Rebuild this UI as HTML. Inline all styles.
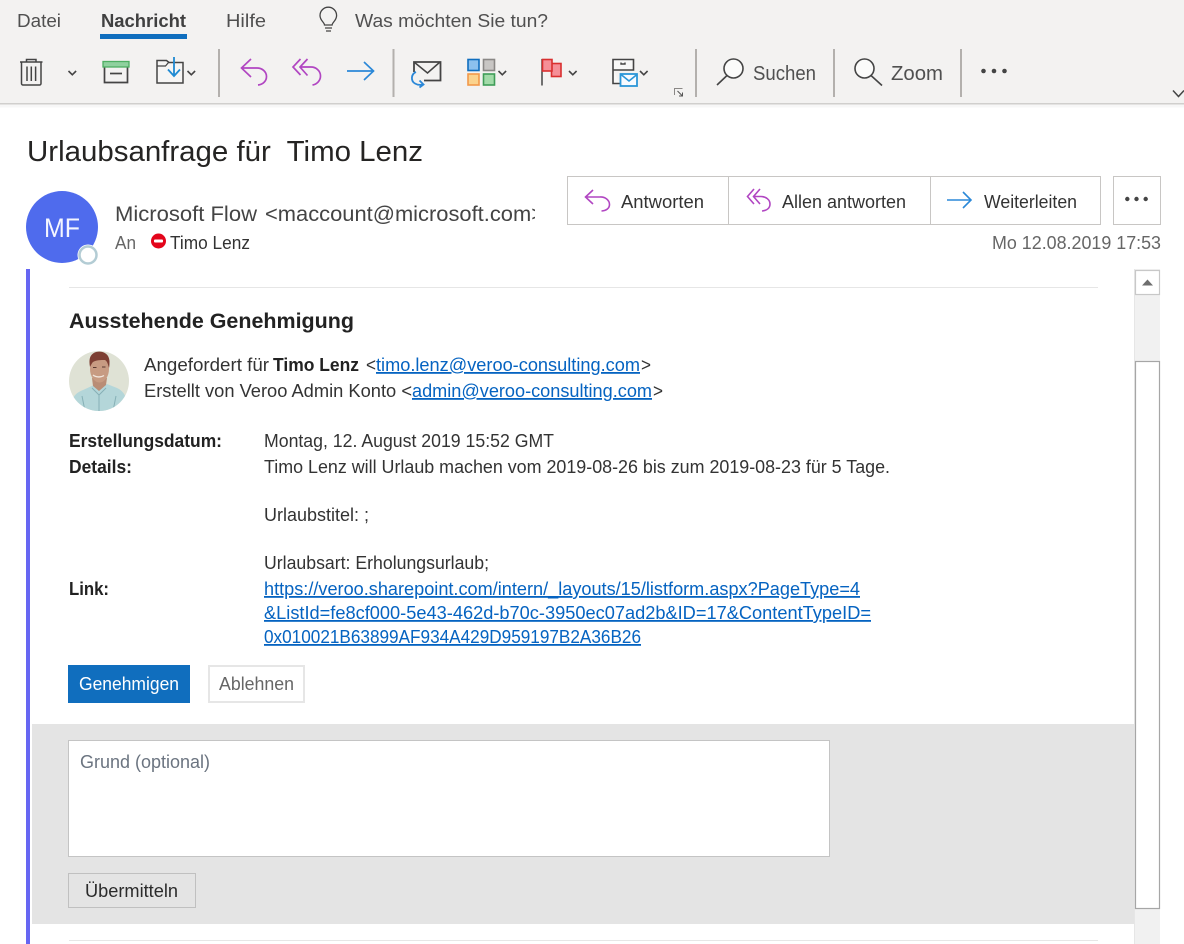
<!DOCTYPE html>
<html lang="de">
<head>
<meta charset="utf-8">
<title>Urlaubsanfrage für Timo Lenz</title>
<style>
html,body{margin:0;padding:0;background:#fff;width:1184px;height:944px;overflow:hidden}
svg{display:block;position:absolute;left:0;top:0}
text{font-family:"Liberation Sans",sans-serif;font-size:18px;fill:#333;white-space:pre}
.b{font-weight:bold;fill:#222}
.r{fill:#505050}
.l{fill:#0563c1;text-decoration:underline}
</style>
</head>
<body>
<svg width="1184" height="944" viewBox="0 0 1184 944" xmlns="http://www.w3.org/2000/svg">
<defs>
<clipPath id="c1"><rect x="110" y="195" width="425" height="40"/></clipPath>
<clipPath id="c2"><circle cx="99" cy="381" r="30"/></clipPath>
</defs>

<!-- ribbon -->
<rect width="1184" height="103" fill="#f3f2f1"/>
<rect y="103" width="1184" height="1.5" fill="#d0cfcd"/>
<rect y="104.500" width="1184" height="3" fill="#f7f7f7"/>
<text class="r" x="17" y="27" textLength="44" lengthAdjust="spacingAndGlyphs">Datei</text>
<text x="101" y="27" class="b" style="fill:#404040" textLength="85" lengthAdjust="spacingAndGlyphs">Nachricht</text>
<rect x="100" y="34" width="87" height="5" fill="#106ebe"/>
<text class="r" x="226" y="27" textLength="40" lengthAdjust="spacingAndGlyphs">Hilfe</text>
<text class="r" x="355" y="27" textLength="193" lengthAdjust="spacingAndGlyphs">Was möchten Sie tun?</text>
<!-- bulb -->
<g fill="none" stroke="#444" stroke-width="1.300">
<path d="M324.500 25.500c0-2.500-4.500-4.500-4.500-9.500a8.300 8.300 0 0 1 16.600 0c0 5-4.500 7-4.500 9.500z" transform="translate(0 -.5)"/>
<path d="M325 28h7M326 31h5"/>
</g>
<!-- trash -->
<g fill="none" stroke="#444" stroke-width="1.500">
<path d="M20 62h22.500M26.500 61.500V59.500h9.500v2"/>
<path d="M21.500 62v21.500a1.500 1.500 0 0 0 1.500 1.500h16.500a1.500 1.500 0 0 0 1.500-1.500V62"/>
<path d="M27 66.500v14.500M31.300 66.500v14.500M35.600 66.500v14.500"/>
</g>
<path d="M68.500 71l3.800 3.800 3.800-3.800" fill="none" stroke="#444" stroke-width="1.600"/>
<!-- archive -->
<path d="M104.500 67.500v15h23v-15" fill="#f3f2f1" stroke="#444" stroke-width="1.700"/>
<rect x="103" y="61.500" width="26" height="5.500" fill="#8fd19e" stroke="#4eae62" stroke-width="1.300"/>
<path d="M110 73.500h12" stroke="#444" stroke-width="1.700"/>
<!-- move -->
<path d="M157 61v22h26V62.500h-14l-2.500-2H157z" fill="#f6f5f4" stroke="#444" stroke-width="1.500"/>
<path d="M157.500 66h8l3-3.500" fill="none" stroke="#444" stroke-width="1.200"/>
<path d="M174 57v18M168 69.500l6 6.500 6-6.500" fill="none" stroke="#1f8ad2" stroke-width="1.800"/>
<path d="M187.500 71l3.800 3.800 3.800-3.800" fill="none" stroke="#444" stroke-width="1.600"/>
<rect x="218" y="49" width="2" height="48" fill="#b3b0ad"/>
<!-- reply -->
<g fill="none" stroke="#b146c2" stroke-width="1.700">
<path d="M251 59l-9.500 9 9.500 9M241.500 68h15a9.500 8.500 0 0 1 10 8.500c0 4.500-3.500 8-8.500 8.500"/>
<path d="M300.500 59l-7.500 8 7.500 8M307.500 59l-7.500 8 7.500 8.500M300 67h10.500a9.500 9 0 0 1 10 9c0 4.500-3.500 8.200-8 9"/>
</g>
<path d="M347 71h27M364 62l9.500 9-9.500 9" fill="none" stroke="#2b88d8" stroke-width="1.700"/>
<rect x="392.500" y="49" width="2" height="48" fill="#b3b0ad"/>
<!-- mail reply -->
<path d="M414 72V62h26.500V80.500H424" fill="none" stroke="#444" stroke-width="1.800"/>
<path d="M414 62l13.500 11L440 62" fill="none" stroke="#444" stroke-width="1.500"/>
<path d="M416 72c-5 2-5.500 9-1 11.500 2.500 1.500 6 1.500 8 1M419.500 80.500l4 4-4 3" fill="none" stroke="#2b88d8" stroke-width="1.800"/>
<!-- categories -->
<rect x="468" y="59.500" width="11" height="11" fill="#8cc1ee" stroke="#106ebe" stroke-width="1.600"/>
<rect x="483.500" y="59.500" width="11" height="11" fill="#c8c6c4" stroke="#8a8886" stroke-width="1.600"/>
<rect x="468" y="74" width="11" height="11" fill="#fbd38d" stroke="#f2994a" stroke-width="1.600"/>
<rect x="483.500" y="74" width="11" height="11" fill="#a2dba9" stroke="#3f9d58" stroke-width="1.600"/>
<path d="M498.500 71l3.800 3.800 3.800-3.800" fill="none" stroke="#444" stroke-width="1.600"/>
<!-- flag -->
<path d="M542 59v26.500" stroke="#444" stroke-width="1.500"/>
<rect x="551.500" y="63.500" width="9.500" height="13" fill="#f58f97" stroke="#d92f2f" stroke-width="1.600"/>
<rect x="542.500" y="59.500" width="9.500" height="11.500" fill="#f58f97" stroke="#d92f2f" stroke-width="1.600"/>
<path d="M569 71l3.800 3.800 3.800-3.800" fill="none" stroke="#444" stroke-width="1.600"/>
<!-- rules -->
<path d="M613 59.500h20.500V70H613zM613 70v13.500h7" fill="#f8f8f7" stroke="#444" stroke-width="1.600"/>
<path d="M621 62.500v1.500h4v-1.500" fill="none" stroke="#444" stroke-width="1.400"/>
<rect x="620.500" y="74" width="16.500" height="12" fill="#f8fbff" stroke="#2b96d8" stroke-width="1.800"/>
<path d="M621 74.500l8 6.500 8-6.500" fill="none" stroke="#2b96d8" stroke-width="1.600"/>
<path d="M640 71l3.800 3.800 3.800-3.800" fill="none" stroke="#444" stroke-width="1.600"/>
<path d="M674.500 95v-6.500h8" fill="none" stroke="#8a8886" stroke-width="1"/>
<path d="M677.500 91l4.500 4.500M682.500 92.500v3.500H679" fill="none" stroke="#555" stroke-width="1"/>
<rect x="695" y="49" width="2" height="48" fill="#b3b0ad"/>
<!-- search -->
<circle cx="733.500" cy="68.500" r="9.500" fill="#fbfbfa" stroke="#444" stroke-width="1.600"/>
<path d="M727 75.500L717 85" stroke="#444" stroke-width="1.600"/>
<text class="r" x="753" y="80" style="font-size:20px" textLength="63" lengthAdjust="spacingAndGlyphs">Suchen</text>
<rect x="833" y="49" width="2" height="48" fill="#b3b0ad"/>
<circle cx="864.500" cy="68.500" r="9.500" fill="#fbfbfa" stroke="#444" stroke-width="1.600"/>
<path d="M871 75.500L882 85.500" stroke="#444" stroke-width="1.600"/>
<text class="r" x="891" y="80" style="font-size:20px" textLength="52" lengthAdjust="spacingAndGlyphs">Zoom</text>
<rect x="960" y="49" width="2" height="48" fill="#b3b0ad"/>
<circle cx="983.500" cy="71" r="2.300" fill="#444"/><circle cx="994" cy="71" r="2.300" fill="#444"/><circle cx="1004.500" cy="71" r="2.300" fill="#444"/>
<path d="M1173 90.500l5.500 6 5.500-6" fill="none" stroke="#444" stroke-width="1.500"/>

<!-- header -->
<text x="27" y="161" style="font-size:29px;fill:#252423" textLength="396" lengthAdjust="spacingAndGlyphs">Urlaubsanfrage für  Timo Lenz</text>
<circle cx="62" cy="227" r="36" fill="#4f6bed"/>
<text x="44" y="237" style="font-size:27px;fill:#f4f6ff" textLength="36" lengthAdjust="spacingAndGlyphs">MF</text>
<circle cx="88" cy="255" r="10.500" fill="#fff"/>
<circle cx="88" cy="255" r="8.500" fill="#fff" stroke="#b3ccd4" stroke-width="2.500"/>
<g clip-path="url(#c1)">
<text x="115" y="221" style="font-size:21px;fill:#444" textLength="142" lengthAdjust="spacingAndGlyphs">Microsoft Flow</text>
<text x="265" y="221" style="font-size:21px;fill:#444" textLength="279" lengthAdjust="spacingAndGlyphs">&lt;maccount@microsoft.com&gt;</text>
</g>
<text class="r" x="115" y="249" style="fill:#666" textLength="21" lengthAdjust="spacingAndGlyphs">An</text>
<circle cx="158.500" cy="241" r="7.500" fill="#e3051b"/>
<rect x="154" y="239.500" width="9" height="3" rx="1" fill="#fff"/>
<text x="170" y="249" textLength="80" lengthAdjust="spacingAndGlyphs">Timo Lenz</text>

<!-- actions -->
<rect x="567.500" y="176.500" width="533" height="48" fill="#fff" stroke="#c8c6c4"/>
<path d="M728.500 176.500v48M930.500 176.500v48" stroke="#c8c6c4"/>
<rect x="1113.500" y="176.500" width="47" height="48" fill="#fff" stroke="#c8c6c4"/>
<g fill="none" stroke="#b146c2" stroke-width="1.600">
<path d="M593 190l-7.500 7 7.500 7M585.500 197h14.500a9 7.500 0 0 1 9.500 7.500c0 3.700-3 6-8 6.500"/>
<path d="M754 189l-6.500 7.500 6.500 7.500M760 189l-6.500 7.500 6.500 7.500M753.500 196.500h7.500a9 7.500 0 0 1 9 7.500c0 4-3 6.500-8 7"/>
</g>
<path d="M947 200h24M963 192l8 8-8 8" fill="none" stroke="#2b88d8" stroke-width="1.600"/>
<text x="621" y="208" textLength="83" lengthAdjust="spacingAndGlyphs">Antworten</text>
<text x="782" y="208" textLength="124" lengthAdjust="spacingAndGlyphs">Allen antworten</text>
<text x="984" y="208" textLength="93" lengthAdjust="spacingAndGlyphs">Weiterleiten</text>
<circle cx="1127.300" cy="199" r="2.200" fill="#444"/><circle cx="1136.500" cy="199" r="2.200" fill="#444"/><circle cx="1145.700" cy="199" r="2.200" fill="#444"/>
<text x="992" y="249" style="fill:#666" textLength="169" lengthAdjust="spacingAndGlyphs">Mo 12.08.2019 17:53</text>

<!-- body frame -->
<rect x="26" y="269" width="4" height="675" fill="#6666f2"/>
<rect x="69" y="287" width="1029" height="1" fill="#e6e6e6"/>

<!-- scrollbar -->
<rect x="1134" y="269" width="1" height="675" fill="#e6e6e6"/>
<rect x="1135" y="269" width="25" height="675" fill="#f1f1f1"/>
<rect x="1135.500" y="270.500" width="24" height="24" fill="#fff" stroke="#c8c8c8" stroke-width="1.200"/>
<path d="M1142 285.500l5.500-6 5.500 6z" fill="#6e6e6e"/>
<rect x="1135.500" y="361.500" width="24" height="547" fill="#fff" stroke="#a6a6a6" stroke-width="1.200"/>

<text class="b" x="69" y="328" style="font-size:21.500px" textLength="285" lengthAdjust="spacingAndGlyphs">Ausstehende Genehmigung</text>

<!-- photo -->
<g clip-path="url(#c2)">
<rect x="69" y="351" width="60" height="60" fill="#dfe2d5"/>
<path d="M70 412c0-13 5-19 13-22l11-5 6 3 7-4 10 4c7 3 11 10 11 24z" fill="#b4d6d9"/>
<path d="M92 378l1 8 6 5 7-6 1-7z" fill="#b98d76"/>
<ellipse cx="99.500" cy="369" rx="9.500" ry="13.500" fill="#c79b82"/>
<path d="M90 367c-1.500-8 0-13 6-15 6-1.500 13 1 13.500 9 0 3 0 5-.5 7-1-4-2-7-4-8-4 0-9 0-12 2-1 1-2 3-3 5z" fill="#7d3f33"/>
<path d="M93 375c3 2.500 8 2.500 11 .5" stroke="#f2e6dc" stroke-width="1.300" fill="none"/>
<path d="M93 367.500h3.500M102 367h3.500" stroke="#5a3a30" stroke-width="1.100" fill="none"/>
<path d="M92 388l7 7 7-7M99 395v16M82 396l3 15M116 396l-3 15" stroke="#86b0b6" stroke-width="1" fill="none"/>
</g>

<text x="144" y="371" textLength="125" lengthAdjust="spacingAndGlyphs">Angefordert für</text>
<text class="b" x="273" y="371" textLength="86" lengthAdjust="spacingAndGlyphs">Timo Lenz</text>
<text x="366" y="371" textLength="10" lengthAdjust="spacingAndGlyphs">&lt;</text>
<text class="l" x="376" y="371" textLength="264" lengthAdjust="spacingAndGlyphs">timo.lenz@veroo-consulting.com</text>
<text x="641" y="371" textLength="10" lengthAdjust="spacingAndGlyphs">&gt;</text>
<text x="144" y="397" textLength="268" lengthAdjust="spacingAndGlyphs">Erstellt von Veroo Admin Konto &lt;</text>
<text class="l" x="412" y="397" textLength="240" lengthAdjust="spacingAndGlyphs">admin@veroo-consulting.com</text>
<text x="653" y="397" textLength="10" lengthAdjust="spacingAndGlyphs">&gt;</text>

<text class="b" x="69" y="447" textLength="153" lengthAdjust="spacingAndGlyphs">Erstellungsdatum:</text>
<text x="264" y="447" textLength="290" lengthAdjust="spacingAndGlyphs">Montag, 12. August 2019 15:52 GMT</text>
<text class="b" x="69" y="473" textLength="63" lengthAdjust="spacingAndGlyphs">Details:</text>
<text x="264" y="473" textLength="626" lengthAdjust="spacingAndGlyphs">Timo Lenz will Urlaub machen vom 2019-08-26 bis zum 2019-08-23 für 5 Tage.</text>
<text x="264" y="521" textLength="105" lengthAdjust="spacingAndGlyphs">Urlaubstitel: ;</text>
<text x="264" y="569" textLength="225" lengthAdjust="spacingAndGlyphs">Urlaubsart: Erholungsurlaub;</text>
<text class="b" x="69" y="595" textLength="40" lengthAdjust="spacingAndGlyphs">Link:</text>
<text class="l" x="264" y="595" textLength="596" lengthAdjust="spacingAndGlyphs">https://veroo.sharepoint.com/intern/_layouts/15/listform.aspx?PageType=4</text>
<text class="l" x="264" y="619" textLength="607" lengthAdjust="spacingAndGlyphs">&amp;ListId=fe8cf000-5e43-462d-b70c-3950ec07ad2b&amp;ID=17&amp;ContentTypeID=</text>
<text class="l" x="264" y="643" textLength="377" lengthAdjust="spacingAndGlyphs">0x010021B63899AF934A429D959197B2A36B26</text>

<!-- buttons -->
<rect x="68" y="665" width="122" height="38" fill="#106ebe"/>
<text x="79" y="690" style="fill:#fff" textLength="100" lengthAdjust="spacingAndGlyphs">Genehmigen</text>
<rect x="209" y="666" width="95" height="36" fill="#fff" stroke="#e6e6e6" stroke-width="2"/>
<text x="219" y="690" style="fill:#666" textLength="75" lengthAdjust="spacingAndGlyphs">Ablehnen</text>

<!-- comment panel -->
<rect x="32" y="724" width="1102" height="200" fill="#e4e4e4"/>
<rect x="68.500" y="740.500" width="761" height="116" fill="#fff" stroke="#c4c4c4"/>
<text x="80" y="768" style="fill:#6b7480" textLength="130" lengthAdjust="spacingAndGlyphs">Grund (optional)</text>
<rect x="68.500" y="873.500" width="127" height="34" fill="#e4e4e4" stroke="#c0c0c0"/>
<text x="85" y="897" style="fill:#2b2b2b" textLength="93" lengthAdjust="spacingAndGlyphs">Übermitteln</text>
<rect x="69" y="940" width="1029" height="1" fill="#e6e6e6"/>
</svg>
</body>
</html>
